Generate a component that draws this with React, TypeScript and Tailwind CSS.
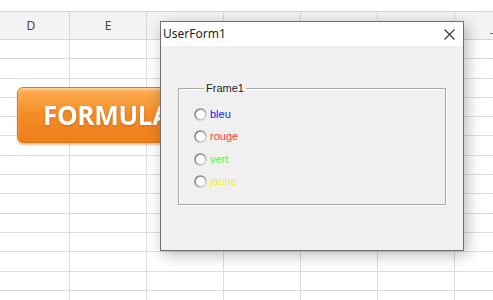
import React from 'react'

const COLS = ['D', 'E', '', '', '', '', '']
const ROW_COUNT = 14

function RadioDot() {
  return (
    <svg width="13" height="13" viewBox="0 0 13 13" className="shrink-0">
      <defs>
        <linearGradient id="ring" x1="0" y1="0" x2="1" y2="1">
          <stop offset="0" stopColor="#6e6e6e" />
          <stop offset="0.55" stopColor="#a8a8a8" />
          <stop offset="1" stopColor="#e8e8e8" />
        </linearGradient>
      </defs>
      <circle cx="6.5" cy="6.5" r="5.5" fill="#ffffff" stroke="url(#ring)" strokeWidth="1.6" />
    </svg>
  )
}

function Option({ label, color }: { label: string; color: string }) {
  return (
    <div className="flex items-center gap-[3px] h-[22.5px]">
      <RadioDot />
      <span className={`text-[11px] leading-none ${color}`}>{label}</span>
    </div>
  )
}

export default function App() {
  return (
    <main
      className="relative w-[493px] h-[300px] overflow-hidden bg-white"
      style={{ fontFamily: '"Liberation Sans", Arial, sans-serif' }}
    >
      {/* Sheet */}
      <div className="h-[11px] bg-white" />
      <div className="flex ml-[-7px] h-[29px] bg-[#f3f3f3] border-t border-b border-[#d6d6d6]">
        {COLS.map((c, i) => (
          <div
            key={i}
            className="w-[77px] shrink-0 border-r border-[#d9d9d9] flex items-center justify-center text-[12px] text-[#444]"
            style={{ fontFamily: '"Noto Sans", sans-serif' }}
          >
            {c}
          </div>
        ))}
      </div>
      {Array.from({ length: ROW_COUNT }).map((_, r) => (
        <div key={r} className="flex ml-[-7px] h-[19.3px] border-b border-[#dcdcdc]">
          {COLS.map((_, i) => (
            <div key={i} className="w-[77px] shrink-0 border-r border-[#dcdcdc]" />
          ))}
        </div>
      ))}
      <span className="absolute left-[490px] top-[33px] w-[3px] h-[1px] bg-[#b06a2a]" />

      {/* Orange shape button */}
      <div className="absolute left-[17px] top-[87px] w-[200px] h-[56px] rounded-[6px] border border-[#e2770f] bg-gradient-to-b from-[#fcae52] via-[#f38c26] to-[#ec7f1c] shadow-[inset_0_2px_2px_rgba(255,255,255,0.45),0_2px_2px_rgba(170,80,0,0.35)] flex items-center pl-[25px]">
        <span className="text-[26px] font-bold text-white tracking-[-0.3px] leading-none drop-shadow-[0_1px_1px_rgba(150,60,0,0.4)]"
          style={{ fontFamily: '"Open Sans", sans-serif' }}>
          FORMULAIRE
        </span>
      </div>

      {/* UserForm window */}
      <div className="absolute left-[160px] top-[21px] w-[304px] h-[230px] border border-[#6f6f6f] bg-[#f0f0f0] shadow-[3px_4px_14px_rgba(0,0,0,0.28)] flex flex-col">
        <div className="h-[24px] bg-white flex items-center justify-between pl-[2px] pr-[8px]">
          <span className="text-[12px] text-[#1e1e1e]" style={{ fontFamily: '"Noto Sans", sans-serif' }}>
            UserForm1
          </span>
          <svg width="11" height="11" viewBox="0 0 11 11">
            <path d="M0.5 0.5 L10.5 10.5 M10.5 0.5 L0.5 10.5" stroke="#333" strokeWidth="1.1" />
          </svg>
        </div>
        <div className="flex-1 pl-[17px] pt-[37px]">
          <fieldset className="w-[268px] h-[122px] border border-[#a9a9a9] shadow-[1px_1px_0_#ffffff,inset_1px_1px_0_#ffffff] pl-[15px] pt-[9px]">
            <legend className="ml-[10px] px-[2px] text-[11px] text-[#222] leading-none">Frame1</legend>
            <Option label="bleu" color="text-[#1a1aff]" />
            <Option label="rouge" color="text-[#ff3b3b]" />
            <Option label="vert" color="text-[#3cff3c]" />
            <Option label="jaune" color="text-[#f5f500]" />
          </fieldset>
        </div>
      </div>
    </main>
  )
}
